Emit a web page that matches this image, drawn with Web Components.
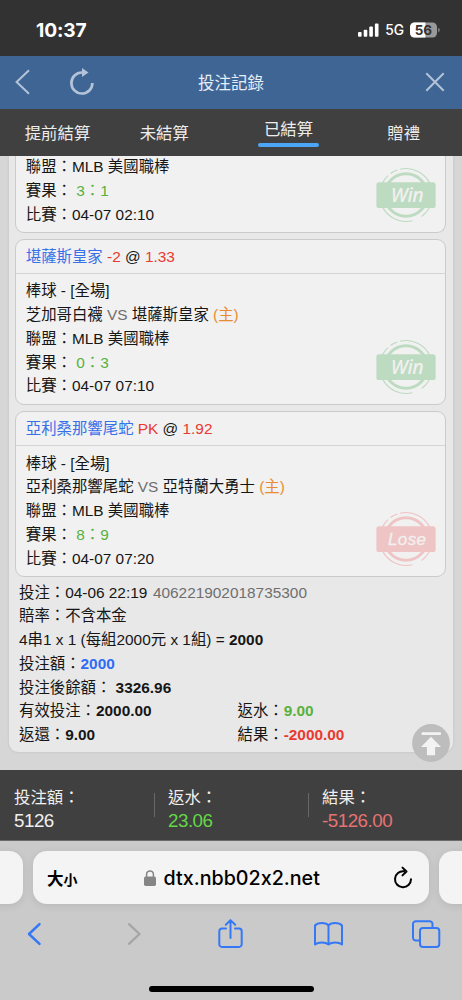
<!DOCTYPE html>
<html lang="zh-Hant">
<head>
<meta charset="utf-8">
<title>投注記錄</title>
<style>
html,body{margin:0;padding:0}
body{width:462px;height:1000px;overflow:hidden;font-family:"Liberation Sans","Noto Sans CJK TC",sans-serif;color:#161616;background:#d6d6d6}
</style>
</head>
<body>
<bet-app></bet-app>
<script>
const define = (name, html) => {
  customElements.define(name, class extends HTMLElement {
    constructor() {
      super();
      this.attachShadow({mode: 'open'}).innerHTML = html;
    }
  });
};

define('status-bar', `
<style>
:host{display:flex;box-sizing:border-box;height:55.5px;background:#323232;color:#fff;font-family:Inter,sans-serif;align-items:center;justify-content:space-between;padding:4px 21px 0 36px}
.time{font-weight:700;font-size:19.2px;letter-spacing:-.1px}
.right{display:flex;align-items:center}
.net{font-weight:500;font-size:13.8px;margin:0 6px 0 6px;letter-spacing:-.1px}
svg{display:block}
</style>
<span class="time">10:37</span>
<div class="right">
<svg width="21" height="14" viewBox="0 0 21 14" fill="#fff"><rect x="0" y="9" width="3.6" height="4.8" rx="1"/><rect x="5.7" y="6.7" width="3.6" height="7.1" rx="1"/><rect x="11.3" y="3.6" width="3.6" height="10.2" rx="1"/><rect x="16.9" y=".4" width="3.6" height="13.4" rx="1"/></svg>
<span class="net">5G</span>
<svg width="31" height="16" viewBox="0 0 31 16"><rect x="0" y=".5" width="27" height="15" rx="4.5" fill="#999"/><path d="M4.5 .5H15.4v15H4.5A4.5 4.5 0 0 1 0 11V5A4.5 4.5 0 0 1 4.5 .5Z" fill="#fff"/><path d="M28.3 5.8a2.6 2.6 0 0 1 0 4.6Z" fill="#999"/><text x="4.8" y="12.7" font-family="Inter" font-weight="700" font-size="13.4" fill="#323232">56</text></svg>
</div>`);

define('nav-bar', `
<style>
:host{display:grid;grid-template-columns:1fr auto 1fr;align-items:center;height:53.5px;background:#3f6595;color:#e6edf5;font-size:16.5px}
.left{display:flex;align-items:center;padding-left:15px;gap:40px}
.close{justify-self:end;margin-right:17px}
svg{display:block;fill:none;stroke:#b3c3d9}
</style>
<div class="left">
<svg width="15" height="26" viewBox="0 0 15 26" stroke-width="2"><path d="M14 1.2 1.6 13 14 24.8"/></svg>
<svg width="24" height="28" viewBox="0 0 24 28" stroke-width="2.7"><path d="M12 4.5A10.5 10.5 0 1 0 22.4 15"/><path d="M12 0 18.5 4.5 12 9Z" fill="#b3c3d9" stroke="none"/></svg>
</div>
<slot></slot>
<svg class="close" width="20" height="20" viewBox="0 0 20 20" stroke-width="2"><path d="m1.3 1.3 17.4 17.4M18.7 1.3 1.3 18.7"/></svg>`);

define('tab-item', `
<style>
:host{display:block;color:#ededed;font-size:16.4px;line-height:24px;padding-top:12px}
:host([active]){padding-top:8px}
.bar{display:none;height:4px;border-radius:2px;background:#4ba6f5;margin:2px -6.2px 0}
:host([active]) .bar{display:block}
</style><slot></slot><div class="bar"></div>`);

define('tab-bar', `
<style>
:host{display:grid;grid-template-columns:115px 98.5px 150px 1fr;justify-items:center;align-items:start;box-sizing:border-box;height:47px;background:#404040;padding:0 18px 0 0}
</style><slot></slot>`);

customElements.define('result-stamp', class extends HTMLElement {
  connectedCallback() {
    const win = this.getAttribute('kind') === 'win';
    const c = win ? '#bddbc1' : '#eec4c5';
    const label = win
      ? '<text x="14.8" y="35.2" font-family="Noto Sans, Open Sans" font-weight="500" font-style="italic" font-size="19.5" textLength="33">Win</text>'
      : '<text x="12" y="34" font-family="Liberation Sans" font-style="italic" font-size="17" textLength="38" stroke="#f2f0f0" stroke-width=".3">Lose</text>';
    this.attachShadow({mode: 'open'}).innerHTML = `
<style>:host{display:block;width:60px;height:56px}svg{display:block}</style>
<svg width="60" height="56" viewBox="0 0 60 56">
<g fill="none" stroke="${c}"><circle cx="30" cy="28" r="21.3" stroke-width="3"/>
<path stroke-width="1.1" d="M24 2.2A26.5 26.5 0 0 1 45.5 49.5M36.5 53.7A26.5 26.5 0 0 1 12 8.7M14.5 6.5A26.5 26.5 0 0 1 21.3 3"/></g>
<rect x=".4" y="15.2" width="59.2" height="25.8" rx="2.6" fill="${c}"/>
<g fill="#f2f0f0">${label}</g></svg>`;
  }
});

define('bet-card', `
<style>
:host{display:block;position:relative;box-sizing:border-box;border:1px solid #cacaca;border-radius:9px;background:#f1f1f1;line-height:23.75px;white-space:nowrap}
.head{padding:5px 9.4px 4.2px;border-bottom:1px solid #d4d4d4}
:host([cut]){border-top:0;border-radius:0 0 9px 9px;margin-top:-.7px}
:host([cut]) .head{display:none}
.body{padding:5.3px 9.4px 6.1px}
:host([cut]) .body{padding-top:0;padding-bottom:5.4px}
.stamp{position:absolute;right:8.7px;bottom:9.3px}
:host([cut]) .stamp{bottom:8.5px}
</style>
<div class="head"><slot name="head"></slot></div>
<div class="body"><slot></slot></div>
<div class="stamp"><slot name="stamp"></slot></div>`);

define('summary-cell', `
<style>
:host{display:block;flex:1;position:relative;color:#efefef;font-size:16.4px;line-height:24px;padding:14.6px 0 0 14px}
.v{font-size:18.8px;letter-spacing:-.5px;color:var(--value,#efefef)}
:host([divided])::before{content:"";position:absolute;left:0;top:23px;height:24px;width:1px;background:#686868}
</style><slot></slot><div class="v"><slot name="value"></slot></div>`);

define('summary-bar', `
<style>
:host{display:flex;box-sizing:border-box;height:71px;background:#404040;border-bottom:1px solid #6a6a6a}
</style><slot></slot>`);

define('browser-bar', `
<style>
:host{display:flex;flex-direction:column;height:159px;background:#cacaca;font-family:Inter,"Noto Sans CJK TC",sans-serif;color:#000}
.tabs{display:flex;gap:9.6px;margin:10px -20px 0 -20px;height:53px}
.t{background:#f4f4f4;border-radius:14px;box-shadow:0 2px 8px rgba(0,0,0,.09)}
.side{width:43.4px}
.url{display:flex;flex:1;align-items:center;padding:0 17px 0 14px}
.aa{font-weight:700;font-size:16.5px}.aa small{font-size:14px}
.lock{margin-left:66.5px}
.name{font-size:19.7px;font-weight:500;margin-left:7.6px;flex:1;font-feature-settings:"calt" 0}
svg{display:block;overflow:visible;fill:none;stroke-linecap:round;stroke-linejoin:round}
.tools{display:grid;grid-template-columns:100px 98px 97px 98px 98px;justify-items:center;align-items:center;height:30px;margin:15px -13px 0 -16px;stroke:#3478f6}
.home{width:165px;height:6px;border-radius:3px;background:#000;margin:36.5px auto 0}
</style>
<div class="tabs">
<div class="t side"></div>
<div class="t url"><span class="aa">大<small>小</small></span>
<svg class="lock" width="12" height="16" viewBox="0 0 12 16"><rect y="6.5" width="12" height="9.5" rx="1.7" fill="#858585"/><path d="M2.6 7V4.3a3.4 3.4 0 0 1 6.8 0V7" stroke="#858585" stroke-width="1.5"/></svg>
<span class="name">dtx.nbb02x2.net</span>
<svg width="18" height="22" viewBox="0 0 18 22" stroke="#000" stroke-width="2"><path d="M10 4.3A8 8 0 1 0 17 12.3M8.5 .6l4 3.9-4 3.9"/></svg></div>
<div class="t side"></div>
</div>
<div class="tools">
<svg width="14" height="22" viewBox="0 0 14 22" stroke-width="2.5"><path d="M12.5 1.2 2 11l10.5 9.8"/></svg>
<svg width="14" height="22" viewBox="0 0 14 22" stroke="#a5a5a5" stroke-width="2.3"><path d="M3 1.200 13.5 11 3 20.800"/></svg>
<svg width="25" height="30" viewBox="0 0 25 30" stroke-width="2"><path d="M8 9.5H4A2.7 2.7 0 0 0 1.3 12.2v13A2.7 2.7 0 0 0 4 28h17a2.7 2.7 0 0 0 2.7-2.8v-13A2.7 2.7 0 0 0 21 9.5h-4M12.5 19V1.2M7.8 5.8l4.7-4.7 4.7 4.7"/></svg>
<svg width="29" height="24" viewBox="0 0 29 24" stroke-width="2"><path d="M14.5 3.5C12 .3 4 .2 1 3.5v19c3-2.7 10.5-2.7 13.5 0 3-2.7 10.5-2.7 13.5 0v-19C25 .2 17 .3 14.5 3.5v19"/></svg>
<svg width="28" height="28" viewBox="0 0 28 28" stroke-width="2"><rect x="8" y="8" width="19.3" height="19" rx="3"/><path d="M8 20.5H4A2.8 2.8 0 0 1 1 17.7V4A2.8 2.8 0 0 1 4 1.2h13.5A2.8 2.8 0 0 1 20.5 4v4"/></svg>
</div>
<div class="home"></div>`);

define('top-button', `
<style>:host{display:block;width:38px;height:38px}svg{display:block}</style>
<svg width="38" height="38" viewBox="0 0 38 38"><circle cx="19" cy="19" r="18.9" fill="#bdbdbd"/><rect x="9.5" y="8.2" width="19.5" height="2.7" rx="1" fill="#f3f3f3"/><path d="m19 12.8 10 10.2h-5.9v8.2h-8.2V23H9Z" fill="#f3f3f3"/></svg>`);

define('bet-app', `
<style>
:host{display:flex;flex-direction:column;height:1000px}
main{position:relative;height:614px;overflow:hidden;background:#d6d6d6}
.panel{box-sizing:border-box;height:596px;margin:0 9.5px 0 9px;padding:0 6.4px;background:#e8e8e8;border-radius:0 0 9px 9px;box-shadow:0 0 3px rgba(0,0,0,.1);font-size:15.4px;line-height:23.75px;white-space:nowrap}
.cards{display:flex;flex-direction:column;gap:6.2px}
.b{color:#3870e8}.r{color:#e93a30}.g{color:#58b13d}.vs{color:#6f6f6f}.o{color:#e88c33}
.info{padding:3.2px 3.6px 0}
.cols{display:grid;grid-template-columns:218.5px 1fr}
b.b{color:#2f6cf6}
top-button{position:absolute;left:412px;top:568px}
</style>
<status-bar></status-bar>
<nav-bar>投注記錄</nav-bar>
<tab-bar><tab-item>提前結算</tab-item><tab-item>未結算</tab-item><tab-item active>已結算</tab-item><tab-item>贈禮</tab-item></tab-bar>
<main>
<div class="panel">
<div class="cards">
<bet-card cut>
<div>聯盟：MLB 美國職棒</div><div>賽果： <span class="g">3：1</span></div><div>比賽：04-07 02:10</div>
<result-stamp slot="stamp" kind="win"></result-stamp></bet-card>
<bet-card><div slot="head"><span class="b">堪薩斯皇家</span> <span class="r">-2</span> @ <span class="r">1.33</span></div>
<div>棒球 - [全場]</div><div>芝加哥白襪 <span class="vs">VS</span> 堪薩斯皇家 <span class="o">(主)</span></div><div>聯盟：MLB 美國職棒</div><div>賽果： <span class="g">0：3</span></div><div>比賽：04-07 07:10</div>
<result-stamp slot="stamp" kind="win"></result-stamp></bet-card>
<bet-card><div slot="head"><span class="b">亞利桑那響尾蛇</span> <span class="r">PK</span> @ <span class="r">1.92</span></div>
<div>棒球 - [全場]</div><div>亞利桑那響尾蛇 <span class="vs">VS</span> 亞特蘭大勇士 <span class="o">(主)</span></div><div>聯盟：MLB 美國職棒</div><div>賽果： <span class="g">8：9</span></div><div>比賽：04-07 07:20</div>
<result-stamp slot="stamp" kind="lose"></result-stamp></bet-card>
</div>
<div class="info">
<div>投注：04-06 22:19 <span class="vs" style="margin-left:1.3px">406221902018735300</span></div>
<div>賠率：不含本金</div>
<div>4串1 x 1 (每組2000元 x 1組) = <b>2000</b></div>
<div>投注額：<b class="b">2000</b></div>
<div>投注後餘額： <b>3326.96</b></div>
<div class="cols"><span>有效投注：<b>2000.00</b></span><span>返水：<b class="g">9.00</b></span><span>返還：<b>9.00</b></span><span>結果：<b class="r">-2000.00</b></span></div>
</div>
</div>
<top-button></top-button>
</main>
<summary-bar>
<summary-cell>投注額：<span slot="value">5126</span></summary-cell>
<summary-cell divided style="--value:#63d846">返水：<span slot="value">23.06</span></summary-cell>
<summary-cell divided style="--value:#e57373">結果：<span slot="value">-5126.00</span></summary-cell>
</summary-bar>
<browser-bar></browser-bar>`);
</script>
</body>
</html>
